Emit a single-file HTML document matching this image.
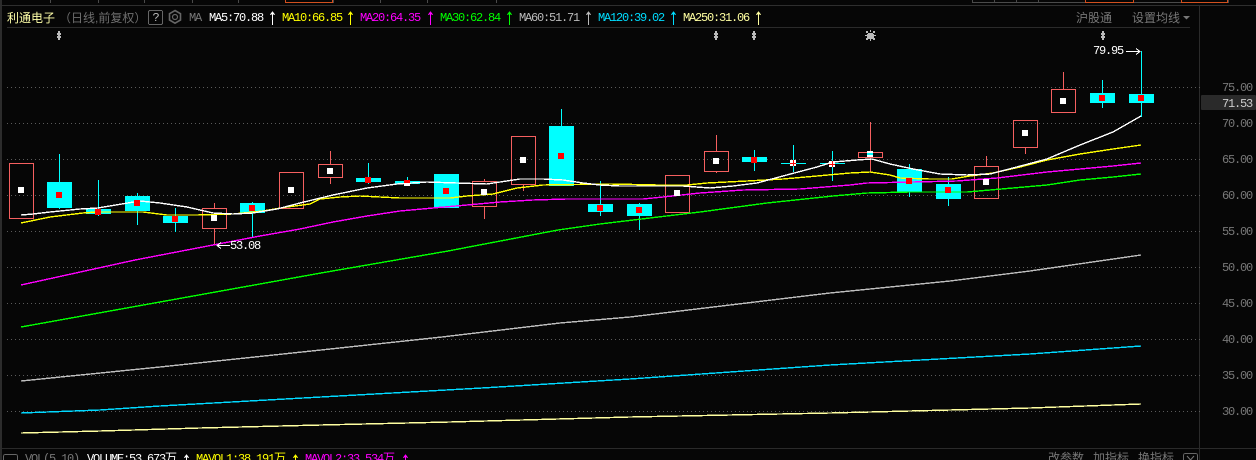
<!DOCTYPE html>
<html><head><meta charset="utf-8"><style>
html,body{margin:0;padding:0;background:#060606;width:1256px;height:460px;overflow:hidden}
svg{display:block}
text{font-family:"Liberation Mono","Noto Sans CJK SC",monospace;font-size:12px;letter-spacing:-1.2px;dominant-baseline:auto}
.c{font-family:"Liberation Sans","WenQuanYi Zen Hei","Noto Sans CJK SC",sans-serif;font-size:12px;letter-spacing:0}
.ax{fill:#787878;font-size:12px}
.l{fill:none;stroke-width:1.4;shape-rendering:crispEdges}
.s{shape-rendering:crispEdges}
</style></head><body>
<svg width="1256" height="460" viewBox="0 0 1256 460" xmlns="http://www.w3.org/2000/svg">
<rect width="1256" height="460" fill="#060606"/>
<g class="s">
<rect x="0" y="0" width="2" height="460" fill="#2c2c2c"/>
<path d="M0 5.5H1256" stroke="#2e2e2e"/>
<path d="M50.5 0V3M98.5 0V3M144.5 0V3M192.5 0V3M238.5 0V3M285.5 0V3M333.5 0V3M380.5 0V3M427.5 0V3M496.5 0V3M972.5 0V3M994.5 0V3M1016.5 0V3M1038.5 0V3M1228.5 0V3M972 2.5H1085M1134 2.5H1181" stroke="#4a4a4a"/>
<path d="M285 2.5H333M285.5 0V3M332.5 0V3M1085 2.5H1134M1085.5 0V3M1133.5 0V3M1181 2.5H1228M1181.5 0V3M1227.5 0V3" stroke="#d2501e"/>
<path d="M7 27.5H1190" stroke="#2a2a2a"/>
<path d="M1199.5 6V460" stroke="#2a2a2a"/>
<path d="M2 448.5H1256" stroke="#2a2a2a"/>
<path d="M7 87.5H1202M7 123.5H1202M7 159.5H1202M7 195.5H1202M7 231.5H1202M7 267.5H1202M7 303.5H1202M7 339.5H1202M7 375.5H1202M7 411.5H1202" stroke="#5a5a5a" stroke-dasharray="1 3"/>
</g>

<!-- header -->
<text class="c" x="7" y="22" fill="#ffffa8">利通电子</text>
<text class="c" x="59" y="22" fill="#6e6e6e">（日线,前复权）</text>
<rect x="148.500" y="10.500" width="14" height="14" rx="1.500" fill="none" stroke="#666" class="s"/>
<text x="152.500" y="21" fill="#bbb">?</text>
<g fill="none" stroke="#666">
<path d="M175 10.500l5.500 3.200v6.300l-5.500 3.200-5.500-3.200v-6.300z" stroke-width="1.600"/>
<circle cx="175" cy="17" r="2.500" stroke-width="1.200"/>
</g>
<text x="189" y="21" fill="#777">MA</text>
<text x="209" y="21" fill="#fff">MA5:70.88</text>
<text x="282" y="21" fill="#ff0">MA10:66.85</text>
<text x="360" y="21" fill="#f0f">MA20:64.35</text>
<text x="440" y="21" fill="#0f0">MA30:62.84</text>
<text x="519" y="21" fill="#bbb">MA60:51.71</text>
<text x="598" y="21" fill="#0df">MA120:39.02</text>
<text x="683" y="21" fill="#ffffa0">MA250:31.06</text>
<g fill="none" class="s">
<path d="M272.500 12V25M270.500 15l2-3 2 3" stroke="#fff"/>
<path d="M350.500 12V25M348.500 15l2-3 2 3" stroke="#ff0"/>
<path d="M430.500 12V25M428.500 15l2-3 2 3" stroke="#f0f"/>
<path d="M509.500 12V25M507.500 15l2-3 2 3" stroke="#0f0"/>
<path d="M588.500 12V25M586.500 15l2-3 2 3" stroke="#bbb"/>
<path d="M673.500 12V25M671.500 15l2-3 2 3" stroke="#0df"/>
<path d="M758.500 12V25M756.500 15l2-3 2 3" stroke="#ffffa0"/>
</g>
<text class="c" x="1076" y="22" fill="#777">沪股通</text>
<text class="c" x="1132" y="22" fill="#777">设置均线</text>
<path d="M1183 16h7l-3.500 3.500z" fill="#777"/>

<!-- markers -->
<g fill="#bbb" class="s">
<path d="M58 31h2v2h1v2h-1v1h1v2h-1v2h-2v-2h-1v-2h1v-1h-1v-2h1z" transform="translate(0,0)"/>
<path d="M58 31h2v2h1v2h-1v1h1v2h-1v2h-2v-2h-1v-2h1v-1h-1v-2h1z" transform="translate(657,0)"/>
<path d="M58 31h2v2h1v2h-1v1h1v2h-1v2h-2v-2h-1v-2h1v-1h-1v-2h1z" transform="translate(695,0)"/>
<path d="M58 31h2v2h1v2h-1v1h1v2h-1v2h-2v-2h-1v-2h1v-1h-1v-2h1z" transform="translate(1044,0)"/>
<path d="M868 33h5v1h1v4h-1v1h-5v-1h-1v-4h1zM866 31h2v2h-2zM873 31h2v2h-2zM866 38h2v2h-2zM873 38h2v2h-2zM870 30h1v2h-1zM870 39h1v2h-1zM865 35h2v1h-2zM874 35h2v1h-2z"/>
</g>

<!-- wicks -->
<path class="s" fill="none" stroke="#0ff" d="M59.500 154V209M98.500 180V216M137.500 193V225M175.500 208V232M252.500 202V237M368.500 163V184M407.500 177V186M561.500 109V126M600.500 181V216M639.500 203V230M754.500 150V171M793.500 145V172M832.500 151V181M909.500 164V197M948.500 177V206M1102.500 80V108M1141.500 51V117"/>
<path class="s" fill="none" stroke="#f55f5f" d="M214.500 203V208M214.500 228V245M330.500 151V164M330.500 177V184M484.500 179V181M484.500 206V219M523.500 184V191M716.500 135V151M716.500 171V173M870.500 122V152M870.500 157V172M986.500 156V166M1025.500 147V154M1063.500 72V89"/>

<!-- cyan bodies -->
<g fill="#0ff" class="s">
<rect x="47" y="182" width="25" height="26"/>
<rect x="86" y="209" width="25" height="5"/>
<rect x="125" y="196" width="25" height="15"/>
<rect x="163" y="216" width="25" height="7"/>
<rect x="240" y="203" width="25" height="10"/>
<rect x="356" y="178" width="25" height="4"/>
<rect x="395" y="181" width="25" height="3"/>
<rect x="434" y="174" width="25" height="34"/>
<rect x="549" y="126" width="25" height="60"/>
<rect x="588" y="204" width="25" height="8"/>
<rect x="627" y="204" width="25" height="12"/>
<rect x="742" y="157" width="25" height="5"/>
<rect x="781" y="163" width="25" height="1"/>
<rect x="820" y="163" width="25" height="1"/>
<rect x="897" y="169" width="25" height="23"/>
<rect x="936" y="184" width="25" height="15"/>
<rect x="1090" y="93" width="25" height="10"/>
<rect x="1129" y="94" width="25" height="9"/>
</g>

<!-- red bodies -->
<g fill="none" stroke="#f55f5f" class="s">
<rect x="9.500" y="163.500" width="24" height="55"/>
<rect x="202.500" y="208.500" width="24" height="20"/>
<rect x="279.500" y="172.500" width="24" height="36"/>
<rect x="318.500" y="164.500" width="24" height="13"/>
<rect x="472.500" y="181.500" width="24" height="25"/>
<rect x="511.500" y="136.500" width="24" height="48"/>
<rect x="665.500" y="175.500" width="24" height="37"/>
<rect x="704.500" y="151.500" width="24" height="20"/>
<rect x="858.500" y="152.500" width="24" height="5"/>
<rect x="974.500" y="166.500" width="24" height="32"/>
<rect x="1013.500" y="120.500" width="24" height="27"/>
<rect x="1051.500" y="89.500" width="24" height="23"/>
</g>

<!-- MAs -->
<polyline class="l" stroke="#ffffa0" points="21,433 100,431 200,428 321,425 450,422 630,417 830,413 1030,408 1141,404"/>
<polyline class="l" stroke="#00d8ff" points="21,413 100,410 160,406 321,397 482,388 630,379 830,365 1030,354 1141,346"/>
<polyline class="l" stroke="#bdbdbd" points="21,381 160,367 321,350 442,337 560,323 630,317 830,293 950,281 1030,271 1141,255"/>
<polyline class="l" stroke="#0f0" points="21,327 160,302 321,273 448,251 558,230 600,224 650,218 700,212 767,203 833,196 867,193 910,192 967,192 1013,188 1047,185 1080,180 1113,177 1141,174"/>
<polyline class="l" stroke="#f0f" points="21,285 135,260 213,245 260,236 300,229 333,222 367,216 400,211 433,208 467,205 500,202 533,200 567,199 643,199 663,197 700,193 743,190 800,189 850,185 867,183 913,182 957,181 997,178 1047,172 1080,169 1113,166 1141,163"/>
<polyline class="l" stroke="#ff0" points="21,223 50,217 83,213 97,212 143,212 167,215 197,215 233,214 263,211 287,207 310,204 320,199 340,197 360,196 380,197 400,198 450,198 467,196 493,194 517,188 543,185 610,184 658,185 687,185 707,183 747,181 783,179 817,176 850,173 870,172 890,175 900,178 930,179 952,179 970,176 993,173 1020,167 1047,160 1080,154 1113,149 1141,145"/>
<polyline class="l" stroke="#fff" points="21,215 33,214 50,212 80,209 98,208 140,201 160,203 187,207 213,213 233,214 253,213 277,209 300,203 333,195 367,188 397,184 427,182 457,183 487,184 500,182 520,179 543,179 563,180 583,183 600,185 620,186 658,186 683,186 710,188 733,186 757,183 783,176 817,167 833,162 857,160 872,159 890,164 913,169 940,174 967,175 990,174 1013,168 1047,159 1080,145 1113,132 1141,116"/>

<!-- dots -->
<g fill="#fff" class="s">
<rect x="18" y="187" width="6" height="6"/><rect x="211" y="215" width="6" height="6"/>
<rect x="288" y="187" width="6" height="6"/><rect x="327" y="168" width="6" height="6"/>
<rect x="481" y="189" width="6" height="6"/><rect x="520" y="157" width="6" height="6"/>
<rect x="674" y="190" width="6" height="6"/><rect x="713" y="158" width="6" height="6"/>
<rect x="983" y="179" width="6" height="6"/><rect x="1022" y="130" width="6" height="6"/>
<rect x="1060" y="98" width="6" height="6"/>
<rect x="790" y="160" width="6" height="6"/><rect x="829" y="161" width="6" height="6"/>
<rect x="867" y="151" width="6" height="6"/><rect x="404" y="180" width="6" height="6"/>
</g>
<g fill="#f00" class="s">
<rect x="56" y="192" width="6" height="6"/><rect x="95" y="209" width="6" height="6"/>
<rect x="134" y="200" width="6" height="6"/><rect x="172" y="216" width="6" height="6"/>
<rect x="249" y="205" width="6" height="6"/><rect x="365" y="177" width="6" height="6"/>
<rect x="404" y="180" width="6" height="3"/><rect x="443" y="188" width="6" height="6"/>
<rect x="558" y="153" width="6" height="6"/><rect x="597" y="205" width="6" height="6"/>
<rect x="636" y="207" width="6" height="6"/><rect x="751" y="157" width="6" height="6"/>
<rect x="906" y="178" width="6" height="6"/><rect x="945" y="187" width="6" height="6"/>
<rect x="1099" y="95" width="6" height="6"/><rect x="1138" y="95" width="6" height="6"/>
<path d="M793 160h1v6h-1zM790 163h6v1h-6zM832 161h1v6h-1zM829 164h6v1h-6z"/>
</g>
<rect x="867" y="153" width="6" height="2" fill="#0ff" class="s"/>

<!-- hi / lo -->
<text x="1093" y="54" fill="#fff">79.95</text>
<path d="M1126 51.500H1140M1136 48.500l4 3-4 3" fill="none" stroke="#fff" class="s"/>
<text x="230" y="249" fill="#fff">53.08</text>
<path d="M217 245.500H230M221 242.500l-4 3 4 3" fill="none" stroke="#fff" class="s"/>

<!-- axis -->
<g text-anchor="end">
<text class="ax" x="1252" y="91">75.00</text>
<text class="ax" x="1252" y="127">70.00</text>
<text class="ax" x="1252" y="163">65.00</text>
<text class="ax" x="1252" y="199">60.00</text>
<text class="ax" x="1252" y="235">55.00</text>
<text class="ax" x="1252" y="271">50.00</text>
<text class="ax" x="1252" y="307">45.00</text>
<text class="ax" x="1252" y="343">40.00</text>
<text class="ax" x="1252" y="379">35.00</text>
<text class="ax" x="1252" y="415">30.00</text>
</g>
<rect x="1201" y="95" width="55" height="15" rx="1" fill="#2a2a2a"/>
<text x="1252" y="107" text-anchor="end" fill="#ccc">71.53</text>

<!-- bottom row -->
<rect x="3.500" y="454.500" width="14" height="14" rx="2" fill="none" stroke="#666" class="s"/>
<text x="25" y="462" fill="#777">VOL(5,10)</text>
<text x="87" y="462" fill="#fff">VOLUME:53.673万</text>
<text x="196" y="462" fill="#ff0">MAVOL1:38.191万</text>
<text x="305" y="462" fill="#f0f">MAVOL2:33.534万</text>
<path d="M186.500 455V460M184.500 458l2-3 2 3" fill="none" stroke="#fff" class="s"/>
<path d="M295.500 455V460M293.500 458l2-3 2 3" fill="none" stroke="#ff0" class="s"/>
<path d="M405.500 455V460M403.500 458l2-3 2 3" fill="none" stroke="#f0f" class="s"/>
<text class="c" x="1048" y="462" fill="#777">改参数</text>
<text class="c" x="1093" y="462" fill="#777">加指标</text>
<text class="c" x="1138" y="462" fill="#777">换指标</text>
<rect x="1183.500" y="453.500" width="14" height="14" rx="2" fill="none" stroke="#666" class="s"/>
<path d="M1187 456l3.500 4 3.500-4" fill="none" stroke="#777"/>
</svg>
</body></html>
